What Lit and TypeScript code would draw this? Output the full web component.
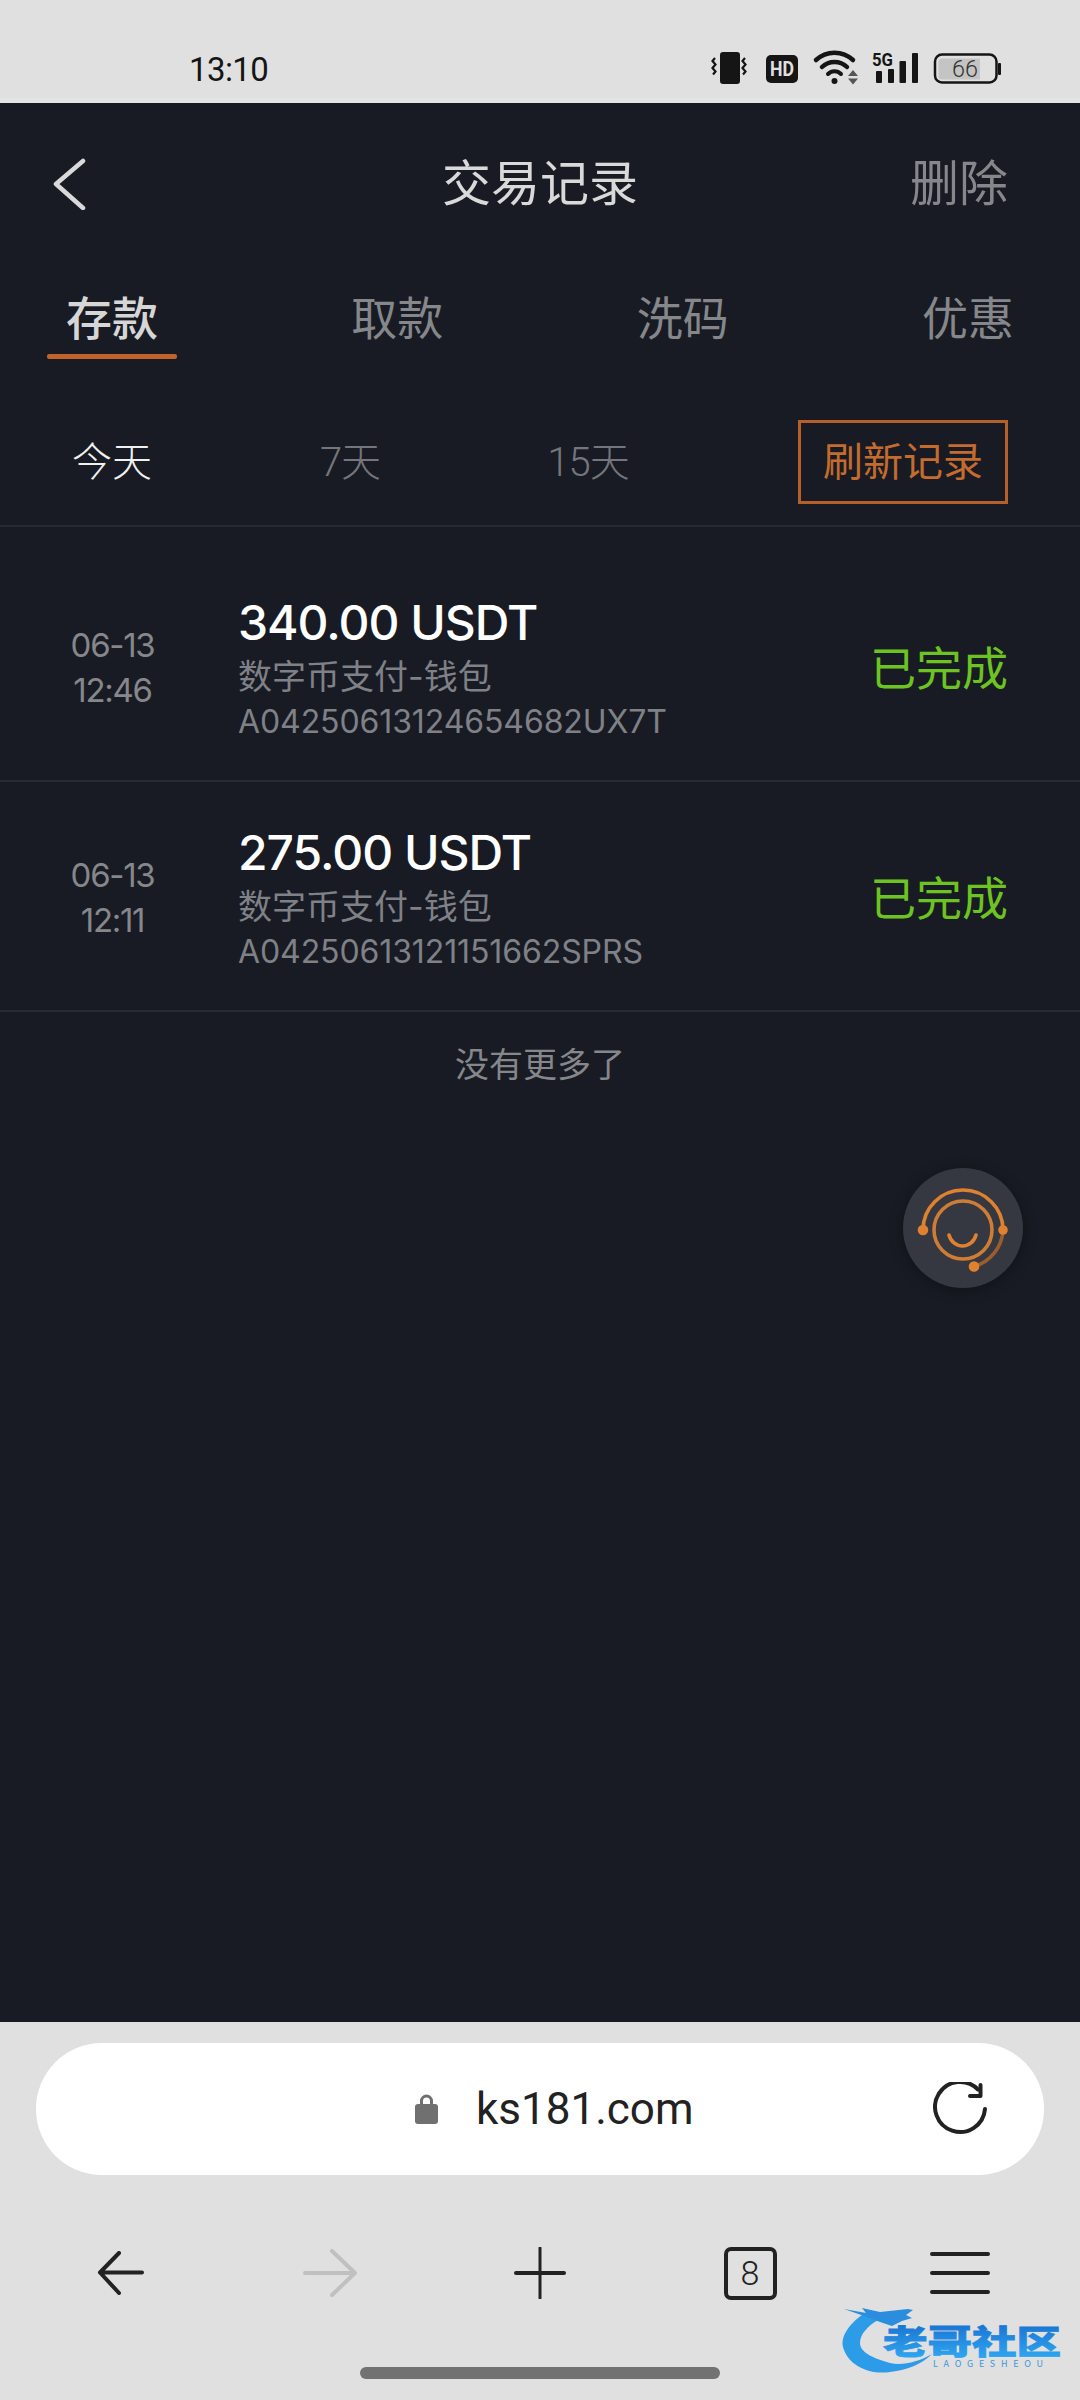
import { LitElement, html, css, svg } from "lit";
import { customElement } from "lit/decorators.js";

interface Txn {
  date: string;
  time: string;
  amount: string;
  channel: string;
  order: string;
  status: string;
}

const TXNS: Txn[] = [
  { date: "06-13", time: "12:46", amount: "340.00 USDT", channel: "数字币支付-钱包", order: "A04250613124654682UX7T", status: "已完成" },
  { date: "06-13", time: "12:11", amount: "275.00 USDT", channel: "数字币支付-钱包", order: "A04250613121151662SPRS", status: "已完成" },
];

const TABS = ["存款", "取款", "洗码", "优惠"];
const RANGES = ["今天", "7天", "15天"];

@customElement("app-root")
export class AppRoot extends LitElement {
  static styles = css`
    :host {
      display: flex;
      flex-direction: column;
      width: 1080px;
      height: 2400px;
      overflow: hidden;
      background: #181b23;
      font-family: Inter, "Noto Sans CJK SC", sans-serif;
      position: relative;
    }
    .status {
      height: 103px;
      flex: none;
      box-sizing: border-box;
      background: #e0e0e0;
      border-bottom: 5px solid #e4e4e4;
      display: flex;
      align-items: flex-start;
      padding: 48px 75px 0 189px;
      color: #151515;
    }
    .clock {
      font-size: 33px;
      line-height: 40px;
      font-family: Roboto, sans-serif;
      letter-spacing: -0.6px;
      margin-top: 2px;
    }
    .status-icons {
      margin-left: auto;
    }
    .status-icons svg {
      display: block;
    }
    .status-icons text {
      font-family: Roboto, sans-serif;
    }
    main {
      flex: 1;
      position: relative;
      min-height: 0;
    }
    .topbar {
      height: 160px;
      display: flex;
      align-items: center;
      justify-content: space-between;
      padding: 0 72px 0 52px;
      position: relative;
    }
    .topbar svg {
      display: block;
    }
    .title {
      position: absolute;
      left: 0;
      right: 0;
      text-align: center;
      font-size: 49px;
      padding-bottom: 7px;
      color: #d9d9d9;
    }
    .delete {
      font-size: 49px;
      padding-bottom: 7px;
      color: #85878b;
    }
    .tabs {
      display: flex;
      justify-content: space-between;
      padding: 25px 47px 0;
    }
    .tab {
      width: 130px;
      text-align: center;
      font-size: 46px;
      line-height: 60px;
      color: #85878b;
    }
    .tab.on {
      color: #d6d6d6;
      font-weight: 500;
    }
    .tab i {
      display: block;
      height: 5px;
      margin-top: 6px;
      border-radius: 2px;
    }
    .tab.on i {
      background: #c0622a;
    }
    .filters {
      display: flex;
      align-items: center;
      margin-top: 61px;
      padding: 0 72px 21px 47px;
      border-bottom: 2px solid #262a33;
    }
    .range {
      width: 130px;
      margin-right: 108px;
      padding-bottom: 6px;
      text-align: center;
      font-family: Roboto, "Noto Sans CJK SC", sans-serif;
      font-size: 40px;
      font-weight: 300;
      letter-spacing: -1px;
      color: #74767c;
    }
    .range.on {
      color: #f0f0f0;
      letter-spacing: 0;
    }
    .refresh {
      margin-left: auto;
      box-sizing: border-box;
      width: 210px;
      height: 84px;
      border: 3px solid #b5602b;
      padding-bottom: 6px;
      color: #c46b2e;
      font-size: 40px;
      display: flex;
      align-items: center;
      justify-content: center;
    }
    .list {
      padding-top: 25px;
    }
    .row {
      box-sizing: border-box;
      height: 230px;
      padding: 3px 72px 0 0;
      border-bottom: 2px solid #262a33;
      display: flex;
      align-items: center;
    }
    .when {
      width: 225px;
      flex: none;
      text-align: center;
      font-size: 33px;
      line-height: 45px;
      letter-spacing: -1.300px;
      color: #85878b;
      margin-right: 13px;
    }
    .body {
      flex: 1;
    }
    .amount {
      font-size: 48px;
      line-height: 60px;
      font-weight: 500;
      letter-spacing: -1px;
      color: #ffffff;
    }
    .channel {
      font-size: 34px;
      line-height: 48px;
      color: #7f8187;
    }
    .order {
      font-size: 32px;
      line-height: 42px;
      letter-spacing: -0.1px;
      color: #7f8187;
    }
    .state {
      font-size: 46px;
      padding-bottom: 6px;
      color: #6cc321;
    }
    .end {
      text-align: center;
      font-size: 34px;
      line-height: 106px;
      color: #85878b;
    }
    .support {
      position: absolute;
      right: 57px;
      top: 1065px;
      width: 120px;
      height: 120px;
      border-radius: 50%;
      background: #353841;
      box-shadow: 0 2px 14px rgba(0, 0, 0, 0.35);
    }
    .support svg {
      display: block;
    }
    .browser {
      flex: none;
      height: 378px;
      box-sizing: border-box;
      background: #e0e0e0;
      padding-top: 21px;
      display: flex;
      flex-direction: column;
    }
    .address {
      box-sizing: border-box;
      margin: 0 36px;
      height: 132px;
      border-radius: 66px;
      background: #ffffff;
      display: flex;
      align-items: center;
      gap: 38px;
      padding: 0 57px 0 379px;
    }
    .address svg {
      display: block;
      flex: none;
    }
    .address .reload {
      margin-left: auto;
    }
    .url {
      font-family: Roboto, sans-serif;
      font-size: 44px;
      color: #222222;
    }
    .nav {
      margin-top: 48px;
      height: 100px;
      padding-left: 15px;
      display: grid;
      grid-template-columns: repeat(5, 210px);
      place-items: center;
    }
    .nav svg {
      display: block;
    }
    .count {
      box-sizing: border-box;
      width: 53px;
      height: 53px;
      border: 4px solid #222222;
      border-radius: 7px;
      display: flex;
      align-items: center;
      justify-content: center;
      font-family: Roboto, sans-serif;
      font-size: 34px;
      font-weight: 300;
      color: #222222;
    }
    .home {
      align-self: center;
      width: 360px;
      height: 12px;
      margin-top: 44px;
      border-radius: 6px;
      background: #727272;
    }
    .mark {
      position: absolute;
      left: 840px;
      top: 2300px;
    }
    .mark text {
      font-family: "Noto Sans CJK SC", sans-serif;
    }
  `;

  // Status glyphs share one coordinate space, in page pixels along the bar.
  private statusIcons() {
    return svg`
      <svg width="300" height="40" viewBox="705 48 300 40">
        <!-- vibrating phone -->
        <rect x="720" y="52" width="20" height="32" rx="3" fill="#151515"/>
        <path d="M715 58l-2.500 3 3 3.500-3 3.500 3 3.500-2.500 3M745 58l-2.500 3 3 3.500-3 3.500 3 3.500-2.500 3" fill="none" stroke="#151515" stroke-width="2.200"/>
        <!-- HD badge -->
        <rect x="766" y="55" width="32" height="28" rx="5" fill="#151515"/>
        <text x="782" y="76" text-anchor="middle" font-size="20" font-weight="700" fill="#e0e0e0" textLength="24" lengthAdjust="spacingAndGlyphs">HD</text>
        <!-- wifi with up/down arrows -->
        <path d="M816 60a27 27 0 0 1 37 0" fill="none" stroke="#151515" stroke-width="4.500" stroke-linecap="round"/>
        <path d="M822 67a18 18 0 0 1 25 0" fill="none" stroke="#151515" stroke-width="4.500" stroke-linecap="round"/>
        <path d="M828 74a9 9 0 0 1 13 0" fill="none" stroke="#151515" stroke-width="4" stroke-linecap="round"/>
        <circle cx="834.500" cy="81" r="3" fill="#151515"/>
        <path d="M848 76l5-6 5 6zM848 78.500l5 6 5-6z" fill="#555555"/>
        <!-- 5G signal -->
        <text x="872" y="66" font-size="18" font-weight="700" fill="#151515" textLength="21" lengthAdjust="spacingAndGlyphs">5G</text>
        <rect x="876" y="71" width="6" height="12" rx="1" fill="#151515"/>
        <rect x="888" y="69" width="6" height="14" rx="1" fill="#151515"/>
        <rect x="899.500" y="61" width="6.500" height="22" rx="1" fill="#151515"/>
        <rect x="912" y="53" width="6" height="30" rx="1" fill="#151515"/>
        <!-- battery -->
        <rect x="935" y="54.500" width="61.500" height="28" rx="7" fill="none" stroke="#151515" stroke-width="2.500"/>
        <path d="M942 58.500h38v21h-38a3.500 3.500 0 0 1-3.500-3.500v-14a3.500 3.500 0 0 1 3.500-3.500z" fill="#c4c4c4"/>
        <text x="965" y="77" text-anchor="middle" font-size="23" font-weight="300" fill="#333333" textLength="26" lengthAdjust="spacingAndGlyphs">66</text>
        <rect x="998" y="63" width="3" height="12" rx="1" fill="#151515"/>
      </svg>`;
  }

  private supportIcon() {
    return svg`
      <svg width="120" height="120" viewBox="0 0 120 120" fill="none" stroke="#e0812f" stroke-width="3.600" stroke-linecap="round">
        <path d="M20 62A40 40 0 0 1 100 62"/>
        <path d="M100 62A40 40 0 0 1 71 98.500" stroke="#9a5d2e"/>
        <circle cx="60" cy="62" r="29" stroke="#cf7c34"/>
        <path d="M46 67a14 15 0 0 0 27 0"/>
        <circle cx="20" cy="62" r="3.500" fill="#e0812f"/>
        <circle cx="100" cy="62" r="3" fill="#e0812f"/>
        <circle cx="71" cy="98.500" r="3.500" fill="#e0812f"/>
      </svg>`;
  }

  private logo() {
    return svg`
      <svg class="mark" width="230" height="80" viewBox="0 0 230 80">
        <defs>
          <linearGradient id="blue" x1="0" y1="0" x2="0" y2="1">
            <stop offset="0" stop-color="#1468cc"/>
            <stop offset="1" stop-color="#33aef5"/>
          </linearGradient>
        </defs>
        <path d="M30 10C12 20 0 35 3 47C8 66 30 75 50 72C68 70 82 64 92 54C78 62 62 66 50 63C32 58 20 52 20 43C20 34 28 26 38 20Z" fill="#2c9be8"/>
        <path d="M4 9L26 13L22 8L40 12L68 9L73 10L66 15L72 18L62 21L52 26L40 22L30 18Z" fill="#2a8ddd"/>
        <text transform="translate(43 54) scale(1.35 1)" font-size="33" font-weight="900" fill="url(#blue)" stroke="url(#blue)" stroke-width="0.800">老哥社区</text>
        <text x="93" y="67" font-size="9" fill="#3d97dd" textLength="110" lengthAdjust="spacing">LAOGESHEOU</text>
      </svg>`;
  }

  render() {
    return html`
      <div class="status" lang="zh-CN">
        <div class="clock">13:10</div>
        <div class="status-icons">${this.statusIcons()}</div>
      </div>

      <main lang="zh-CN">
        <div class="topbar">
          <svg width="36" height="54" viewBox="0 0 36 54" fill="none" stroke="#d9d9d9" stroke-width="4.500" stroke-linecap="round" stroke-linejoin="round">
            <path d="M31 5L4 28L31 52"/>
          </svg>
          <div class="title">交易记录</div>
          <div class="delete">删除</div>
        </div>

        <div class="tabs">
          ${TABS.map(
            (t, i) => html`<div class="tab ${i === 0 ? "on" : ""}">${t}<i></i></div>`
          )}
        </div>

        <div class="filters">
          ${RANGES.map(
            (r, i) => html`<div class="range ${i === 0 ? "on" : ""}">${r}</div>`
          )}
          <div class="refresh">刷新记录</div>
        </div>

        <div class="list">
          ${TXNS.map(
            (t) => html`
              <div class="row">
                <div class="when">${t.date}<br />${t.time}</div>
                <div class="body">
                  <div class="amount">${t.amount}</div>
                  <div class="channel">${t.channel}</div>
                  <div class="order">${t.order}</div>
                </div>
                <div class="state">${t.status}</div>
              </div>
            `
          )}
        </div>
        <div class="end">没有更多了</div>

        <div class="support">${this.supportIcon()}</div>
      </main>

      <div class="browser">
        <div class="address">
          <svg width="23" height="30" viewBox="0 0 23 30">
            <path d="M6.500 13V7a5 5 0 0 1 10 0v6" fill="none" stroke="#707070" stroke-width="3"/>
            <rect x="0" y="10" width="23" height="20" rx="3" fill="#707070"/>
          </svg>
          <span class="url">ks181.com</span>
          <svg class="reload" width="54" height="54" viewBox="0 0 54 54" fill="none" stroke="#222222" stroke-width="4" stroke-linecap="round" stroke-linejoin="round">
            <path d="M45 7.500A25 25 0 1 0 52 27"/>
            <path d="M47.500 3V14H37"/>
          </svg>
        </div>

        <div class="nav">
          <svg width="48" height="44" viewBox="0 0 48 44" fill="none" stroke="#222222" stroke-width="4" stroke-linecap="round" stroke-linejoin="round">
            <path d="M46 21.500H4M23 2L4 21.500L23 42"/>
          </svg>
          <svg width="54" height="48" viewBox="0 0 54 48" fill="none" stroke="#c0c0c0" stroke-width="4" stroke-linecap="round" stroke-linejoin="round">
            <path d="M2 24H51M29 2L52 24L29 46"/>
          </svg>
          <svg width="52" height="52" viewBox="0 0 52 52" fill="none" stroke="#222222" stroke-linecap="round">
            <path d="M2 26H50" stroke-width="4"/>
            <path d="M26 1V51" stroke-width="3"/>
          </svg>
          <div class="count">8</div>
          <svg width="60" height="42" viewBox="0 0 60 42" fill="none" stroke="#222222" stroke-width="4" stroke-linecap="round">
            <path d="M2 2H58M2 21H58M2 40H58"/>
          </svg>
        </div>

        <div class="home"></div>
      </div>

      ${this.logo()}
    `;
  }
}
